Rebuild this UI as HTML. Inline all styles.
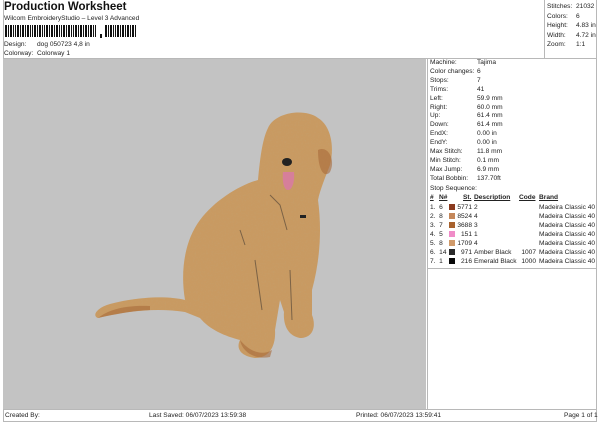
<!DOCTYPE html>
<html><head><style>
*{margin:0;padding:0;box-sizing:border-box}
body{width:600px;height:424px;background:#fff;font-family:"Liberation Sans",sans-serif;font-size:6.6px;color:#222;position:relative;overflow:hidden}
.a{position:absolute;white-space:nowrap}
.l{position:absolute;background:#b8b8b8}
</style></head><body>
<div class="a" style="left:4px;top:1px;font-size:11.5px;font-weight:bold;color:#111">Production Worksheet</div>
<div class="a" style="left:4px;top:15px">Wilcom EmbroideryStudio – Level 3 Advanced</div>
<svg class="a" style="left:4px;top:25px" width="135" height="14">
<g fill="#111">
<rect x="1" y="0" width="2" height="12"/><rect x="4" y="0" width="1" height="12"/><rect x="6" y="0" width="2" height="12"/><rect x="9" y="0" width="1" height="12"/><rect x="11" y="0" width="1" height="12"/><rect x="13" y="0" width="2" height="12"/><rect x="16" y="0" width="1" height="12"/><rect x="18" y="0" width="2" height="12"/><rect x="21" y="0" width="1" height="12"/><rect x="23" y="0" width="2" height="12"/><rect x="26" y="0" width="1" height="12"/><rect x="28" y="0" width="1" height="12"/><rect x="30" y="0" width="2" height="12"/><rect x="33" y="0" width="1" height="12"/><rect x="35" y="0" width="2" height="12"/><rect x="38" y="0" width="1" height="12"/><rect x="40" y="0" width="1" height="12"/><rect x="42" y="0" width="2" height="12"/><rect x="45" y="0" width="1" height="12"/><rect x="47" y="0" width="2" height="12"/><rect x="50" y="0" width="1" height="12"/><rect x="52" y="0" width="2" height="12"/><rect x="55" y="0" width="1" height="12"/><rect x="57" y="0" width="1" height="12"/><rect x="59" y="0" width="2" height="12"/><rect x="62" y="0" width="1" height="12"/><rect x="64" y="0" width="2" height="12"/><rect x="67" y="0" width="1" height="12"/><rect x="69" y="0" width="1" height="12"/><rect x="71" y="0" width="2" height="12"/><rect x="74" y="0" width="1" height="12"/><rect x="76" y="0" width="2" height="12"/><rect x="79" y="0" width="1" height="12"/><rect x="81" y="0" width="2" height="12"/><rect x="84" y="0" width="1" height="12"/><rect x="86" y="0" width="2" height="12"/><rect x="89" y="0" width="1" height="12"/><rect x="91" y="0" width="1" height="12"/>
<rect x="96" y="9" width="2" height="4"/>
<rect x="101" y="0" width="2" height="12"/><rect x="104" y="0" width="1" height="12"/><rect x="106" y="0" width="2" height="12"/><rect x="109" y="0" width="1" height="12"/><rect x="111" y="0" width="1" height="12"/><rect x="113" y="0" width="2" height="12"/><rect x="116" y="0" width="1" height="12"/><rect x="118" y="0" width="2" height="12"/><rect x="121" y="0" width="1" height="12"/><rect x="123" y="0" width="2" height="12"/><rect x="126" y="0" width="1" height="12"/><rect x="128" y="0" width="2" height="12"/><rect x="131" y="0" width="1" height="12"/>
</g></svg>
<div class="a" style="left:4px;top:41px">Design:</div><div class="a" style="left:37px;top:41px">dog 050723 4,8 in</div>
<div class="a" style="left:4px;top:50px">Colorway:</div><div class="a" style="left:37px;top:50px">Colorway 1</div>
<div class="l" style="left:3px;top:0;width:1px;height:59px"></div>
<div class="l" style="left:3px;top:58px;width:594px;height:1px"></div>
<div class="l" style="left:596px;top:0;width:1px;height:422px"></div>
<div class="l" style="left:544px;top:0;width:1px;height:58px"></div>
<div class="a" style="left:547px;top:2px;line-height:9.5px">Stitches:<br>Colors:<br>Height:<br>Width:<br>Zoom:</div>
<div class="a" style="left:576px;top:2px;line-height:9.5px">21032<br>6<br>4.83 in<br>4.72 in<br>1:1</div>
<div class="a" style="left:3px;top:59px;width:423px;height:350px;background:#c3c3c3"></div>
<svg class="a" style="left:0;top:0" width="430" height="410">
<defs><filter id="f"><feTurbulence type="fractalNoise" baseFrequency="0.6" numOctaves="2" result="n"/><feColorMatrix in="n" type="matrix" values="0 0 0 0 0.55  0 0 0 0 0.35  0 0 0 0 0.15  0 0 0 1.2 -0.5" result="c"/><feComposite in="c" in2="SourceGraphic" operator="in" result="t"/><feMerge><feMergeNode in="SourceGraphic"/><feMergeNode in="t"/></feMerge></filter></defs>
<g fill="#c99a62" filter="url(#f)">
<path d="M268,128 C275,112 305,108 318,118 C330,125 335,145 330,165 C325,178 320,190 318,200 C322,230 320,260 312,290 L312,315 C316,325 314,338 300,338 C288,336 283,325 284,312 L280,300 L275,330 C276,345 270,358 255,358 C240,356 236,348 240,340 C225,336 210,330 200,318 L185,312 C160,308 130,310 98,318 C92,316 96,308 110,304 C140,296 170,296 185,300 C180,270 185,240 200,220 C215,200 240,185 258,180 C260,160 262,140 268,128Z"/>
</g>
<g fill="#a86a3a" opacity="0.6">
<path d="M318,150 C328,145 336,160 330,172 C325,178 318,172 318,150Z"/>
<path d="M98,318 C110,308 130,305 150,306 L150,310 C130,311 112,315 98,318Z"/>
<path d="M240,340 C250,352 262,356 272,350 L270,357 C255,360 242,352 240,340Z"/>
</g>
<ellipse cx="287" cy="162" rx="5" ry="4" fill="#222"/>
<path d="M283,172 L294,172 C295,182 292,190 288,190 C284,190 282,182 283,172Z" fill="#d67f9a"/>
<rect x="300" y="215" width="6" height="3" fill="#222"/>
<path d="M270,195 L280,205 L287,230 M240,230 L245,245 M255,260 L262,310 M290,270 L292,320" stroke="#5a4a3a" stroke-width="1" fill="none" opacity="0.7"/>
</svg>
<div class="l" style="left:427px;top:59px;width:1px;height:350px"></div>
<div class="a" style="left:430px;top:59px;line-height:8.9px">Machine:<br>Color changes:<br>Stops:<br>Trims:<br>Left:<br>Right:<br>Up:<br>Down:<br>EndX:<br>EndY:<br>Max Stitch:<br>Min Stitch:<br>Max Jump:<br>Total Bobbin:</div>
<div class="a" style="left:477px;top:59px;line-height:8.9px">Tajima<br>6<br>7<br>41<br>59.9 mm<br>60.0 mm<br>61.4 mm<br>61.4 mm<br>0.00 in<br>0.00 in<br>11.8 mm<br>0.1 mm<br>6.9 mm<br>137.70ft</div>
<div class="a" style="left:430px;top:185px">Stop Sequence:</div>
<div class="a" style="left:430px;top:194px;font-weight:bold;text-decoration:underline">#</div>
<div class="a" style="left:439px;top:194px;font-weight:bold;text-decoration:underline">N#</div>
<div class="a" style="left:463px;top:194px;font-weight:bold;text-decoration:underline">St.</div>
<div class="a" style="left:474px;top:194px;font-weight:bold;text-decoration:underline">Description</div>
<div class="a" style="left:519px;top:194px;font-weight:bold;text-decoration:underline">Code</div>
<div class="a" style="left:539px;top:194px;font-weight:bold;text-decoration:underline">Brand</div>
<div class="a" style="left:430px;top:203px;line-height:9px">1.&nbsp; 6<br>2.&nbsp; 8<br>3.&nbsp; 7<br>4.&nbsp; 5<br>5.&nbsp; 8<br>6.&nbsp; 14<br>7.&nbsp; 1</div>
<div class="a" style="left:449px;top:204px;width:6px;height:6px;background:#8a3a1e"></div>
<div class="a" style="left:449px;top:213px;width:6px;height:6px;background:#c4875a"></div>
<div class="a" style="left:449px;top:222px;width:6px;height:6px;background:#a8622e"></div>
<div class="a" style="left:449px;top:231px;width:6px;height:6px;background:#f08cc8"></div>
<div class="a" style="left:449px;top:240px;width:6px;height:6px;background:#d09a6a"></div>
<div class="a" style="left:449px;top:249px;width:6px;height:6px;background:#2a2a2a"></div>
<div class="a" style="left:449px;top:258px;width:6px;height:6px;background:#080808"></div>
<div class="a" style="left:456px;top:203px;line-height:9px;width:16px;text-align:right">5771<br>8524<br>3688<br>151<br>1709<br>971<br>216</div>
<div class="a" style="left:474px;top:203px;line-height:9px">2<br>4<br>3<br>1<br>4<br>Amber Black<br>Emerald Black</div>
<div class="a" style="left:519px;top:203px;line-height:9px;width:17px;text-align:right"><br><br><br><br><br>1007<br>1000</div>
<div class="a" style="left:539px;top:203px;line-height:9px">Madeira Classic 40<br>Madeira Classic 40<br>Madeira Classic 40<br>Madeira Classic 40<br>Madeira Classic 40<br>Madeira Classic 40<br>Madeira Classic 40</div>
<div class="l" style="left:428px;top:268px;width:168px;height:1px"></div>
<div class="l" style="left:3px;top:409px;width:594px;height:1px"></div>
<div class="l" style="left:3px;top:409px;width:1px;height:13px"></div>
<div class="l" style="left:3px;top:421px;width:594px;height:1px"></div>
<div class="a" style="left:5px;top:412px">Created By:</div>
<div class="a" style="left:149px;top:412px">Last Saved: 06/07/2023 13:59:38</div>
<div class="a" style="left:356px;top:412px">Printed: 06/07/2023 13:59:41</div>
<div class="a" style="left:564px;top:412px">Page 1 of 1</div>
</body></html>
